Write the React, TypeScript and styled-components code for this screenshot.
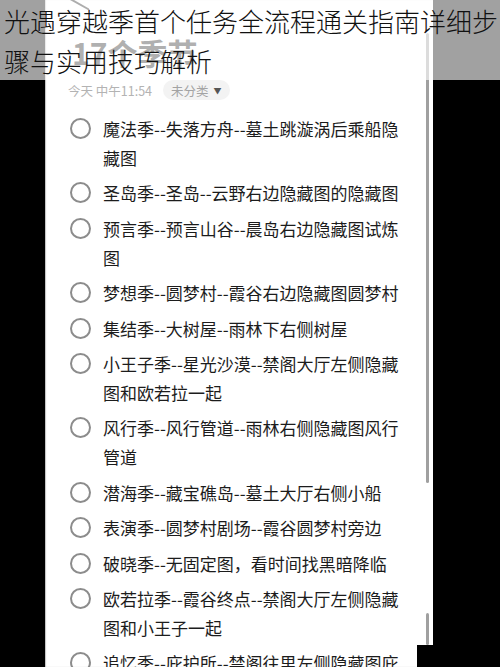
import styled, { createGlobalStyle } from "styled-components";

const GlobalStyle = createGlobalStyle`
  html, body {
    margin: 0;
    padding: 0;
    background: #000;
  }
  body {
    font-family: "Noto Sans CJK SC", "Noto Sans", sans-serif;
  }
`;

const tasks = [
  "魔法季--失落方舟--墓土跳漩涡后乘船隐藏图",
  "圣岛季--圣岛--云野右边隐藏图的隐藏图",
  "预言季--预言山谷--晨岛右边隐藏图试炼图",
  "梦想季--圆梦村--霞谷右边隐藏图圆梦村",
  "集结季--大树屋--雨林下右侧树屋",
  "小王子季--星光沙漠--禁阁大厅左侧隐藏图和欧若拉一起",
  "风行季--风行管道--雨林右侧隐藏图风行管道",
  "潜海季--藏宝礁岛--墓土大厅右侧小船",
  "表演季--圆梦村剧场--霞谷圆梦村旁边",
  "破晓季--无固定图，看时间找黑暗降临",
  "欧若拉季--霞谷终点--禁阁大厅左侧隐藏图和小王子一起",
  "追忆季--庇护所--禁阁往里左侧隐藏图庇护所",
];

const App = () => {
  return (
    <>
      <GlobalStyle />
      <Page>
        <Phone>
          <Nav>
            <svg width="24" height="12" viewBox="0 0 24 12">
              <polyline points="18,-9 2,0 18,9" fill="none" stroke="#222" strokeWidth="2" strokeLinecap="round" />
            </svg>
          </Nav>
          <Heading>17个季节</Heading>
          <Meta>
            <Time>今天 中午11:54</Time>
            <Chip>
              未分类
              <Caret>▼</Caret>
            </Chip>
          </Meta>
          <List>
            {tasks.map((t) => (
              <Item key={t}>
                <Circle />
                <ItemText>{t}</ItemText>
              </Item>
            ))}
          </List>
          <ScrollThumb $top={33} $height={450} />
          <ScrollThumb $top={613} $height={32} />
        </Phone>
        <Corner />
        <Banner>光遇穿越季首个任务全流程通关指南详细步骤与实用技巧解析</Banner>
      </Page>
    </>
  );
};

export default App;

const Page = styled.div`
  position: relative;
  width: 500px;
  height: 667px;
  overflow: hidden;
  background: #000;
  padding-left: 45px;
  box-sizing: border-box;
`;

const Phone = styled.div`
  position: relative;
  width: 388px;
  height: 667px;
  overflow: hidden;
  background: #fff;
  box-shadow: inset 1px 0 1px rgba(0, 0, 0, 0.25);
`;

const Nav = styled.div`
  display: flex;
  height: 12px;
  padding-left: 25px;
  svg {
    display: block;
  }
`;

const Heading = styled.div`
  margin-top: 20px;
  padding-left: 27px;
  font-size: 30px;
  line-height: 40px;
  font-weight: 700;
  color: #2a2a2a;
`;

const Meta = styled.div`
  display: flex;
  align-items: center;
  gap: 11px;
  height: 20px;
  margin-top: 8px;
  padding-left: 23px;
  font-size: 12.5px;
`;

const Time = styled.span`
  color: #b3b3b3;
`;

const Chip = styled.span`
  display: flex;
  align-items: center;
  gap: 5px;
  height: 20px;
  padding: 0 8px;
  border-radius: 10px;
  background: #f3f3f3;
  color: #a3a3a3;
`;

const Caret = styled.span`
  font-size: 8px;
  color: #555;
`;

const List = styled.div`
  display: flex;
  flex-direction: column;
  gap: 6.4px;
  margin-top: 14px;
  padding-left: 25px;
`;

const Item = styled.div`
  display: flex;
  align-items: flex-start;
  gap: 12px;
`;

const Circle = styled.span`
  flex: none;
  width: 21px;
  height: 21px;
  margin-top: 4px;
  border: 2px solid #8c8c8c;
  border-radius: 50%;
  box-sizing: border-box;
`;

const ItemText = styled.div`
  width: 300px;
  font-size: 17px;
  line-height: 29px;
  color: #1c1c1c;
`;

const ScrollThumb = styled.div<{ $top: number; $height: number }>`
  position: absolute;
  left: 381px;
  top: ${(p) => p.$top}px;
  width: 3px;
  height: ${(p) => p.$height}px;
  border-radius: 2px;
  background: #a0a0a0;
`;

const Corner = styled.div`
  position: absolute;
  left: 417px;
  top: 645px;
  width: 83px;
  height: 22px;
  background: #000;
`;

const Banner = styled.div`
  position: absolute;
  left: 0;
  top: 0;
  width: 500px;
  height: 80px;
  box-sizing: border-box;
  padding: 1px 0 0 4px;
  background: rgba(255, 255, 255, 0.63);
  font-size: 26px;
  line-height: 40px;
  color: #111;
  font-weight: 300;
`;
